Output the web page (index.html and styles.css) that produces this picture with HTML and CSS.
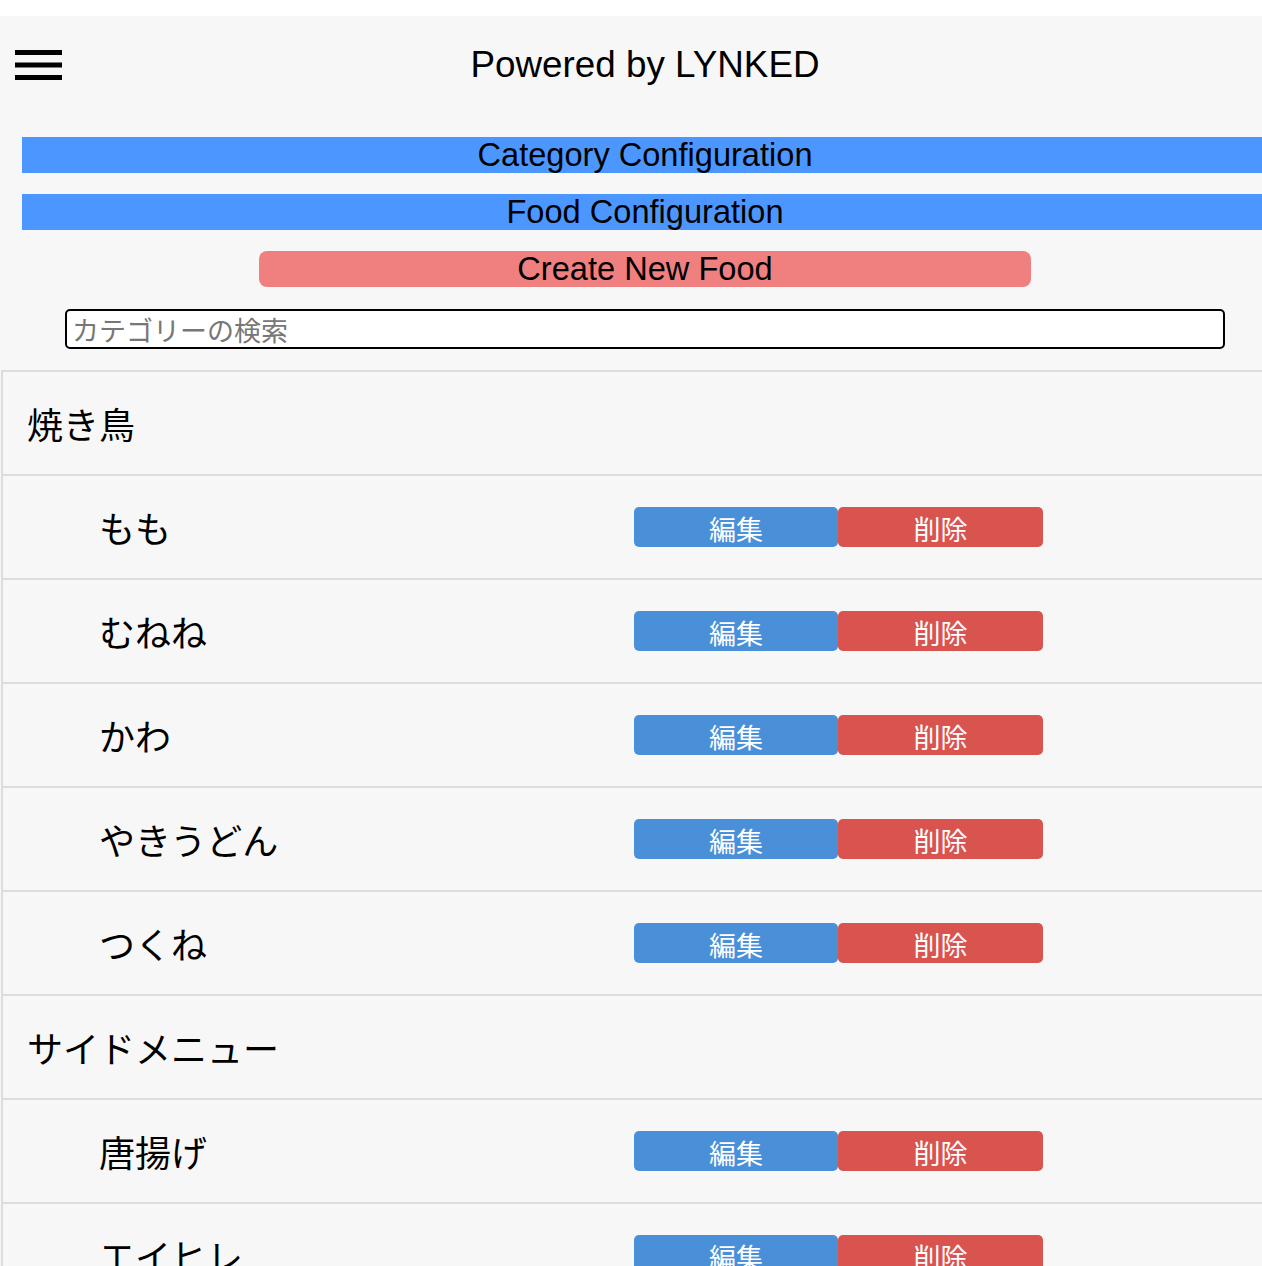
FILE: index.html
```html
<!DOCTYPE html>
<html lang="ja">
<head>
<meta charset="utf-8">
<title>Food Configuration</title>
<link rel="stylesheet" href="styles.css">
</head>
<body>
<div class="app">
  <header class="topbar">
    <div class="menu-cell">
      <svg class="hamburger" width="47" height="31" viewBox="0 0 47 31">
        <rect x="0" y="0" width="47" height="5" fill="#000"/>
        <rect x="0" y="12.5" width="47" height="5" fill="#000"/>
        <rect x="0" y="25" width="47" height="5" fill="#000"/>
      </svg>
    </div>
    <h1 class="title">Powered by LYNKED</h1>
    <div></div>
  </header>
  <nav class="controls">
    <button class="nav-btn">Category Configuration</button>
    <button class="nav-btn">Food Configuration</button>
    <button class="create-btn">Create New Food</button>
    <input class="search" type="text" placeholder="カテゴリーの検索">
  </nav>
  <ul class="list">
    <li class="row category">焼き鳥</li>
    <li class="row item"><span class="name">もも</span><span class="actions"><button class="edit">編集</button><button class="del">削除</button></span></li>
    <li class="row item"><span class="name">むねね</span><span class="actions"><button class="edit">編集</button><button class="del">削除</button></span></li>
    <li class="row item"><span class="name">かわ</span><span class="actions"><button class="edit">編集</button><button class="del">削除</button></span></li>
    <li class="row item"><span class="name">やきうどん</span><span class="actions"><button class="edit">編集</button><button class="del">削除</button></span></li>
    <li class="row item"><span class="name">つくね</span><span class="actions"><button class="edit">編集</button><button class="del">削除</button></span></li>
    <li class="row category">サイドメニュー</li>
    <li class="row item"><span class="name">唐揚げ</span><span class="actions"><button class="edit">編集</button><button class="del">削除</button></span></li>
    <li class="row item"><span class="name">エイヒレ</span><span class="actions"><button class="edit">編集</button><button class="del">削除</button></span></li>
  </ul>
</div>
</body>
</html>
```
FILE: styles.css
```css
html, body {
  margin: 0;
  padding: 0;
  overflow: hidden;
  background: #ffffff;
}
body {
  font-family: "Liberation Sans", Arial, "Noto Sans CJK JP", sans-serif;
  color: #000;
}
.app {
  margin-top: 16px;
  width: 1290px;
  background: #f7f7f7;
  min-height: 1300px;
}
.topbar {
  height: 98px;
  display: grid;
  grid-template-columns: 1fr auto 1fr;
  align-items: center;
}
.menu-cell {
  padding-left: 15px;
  display: flex;
  align-items: center;
}
.hamburger { display: block; }
.title {
  margin: 0;
  font-weight: normal;
  font-size: 36.8px;
  line-height: 40px;
}
.controls {
  display: flex;
  flex-direction: column;
  align-items: center;
  gap: 21px;
  padding-top: 23px;
}
.nav-btn, .create-btn {
  border: none;
  margin: 0;
  padding: 0;
  font-family: "Liberation Sans", Arial, sans-serif;
  font-size: 32.6px;
  line-height: 36px;
  height: 36px;
  color: #000;
}
.nav-btn {
  width: 1246px;
  background: #4c97ff;
}
.create-btn {
  width: 772px;
  background: #f08080;
  border-radius: 8px;
}
.search {
  margin-top: 1px;
  box-sizing: border-box;
  width: 1160px;
  height: 40px;
  border: 2px solid #000;
  border-radius: 5px;
  background: #fff;
  padding: 0 5px;
  font-family: "Noto Sans CJK JP", sans-serif;
  font-size: 27px;
}
.search::placeholder { color: #777; }
.list {
  list-style: none;
  margin: 21px 0 0 1px;
  padding: 0;
}
.row {
  box-sizing: border-box;
  height: 104px;
  border-top: 2px solid #dddddd;
  border-left: 2px solid #dddddd;
  display: flex;
  align-items: center;
  font-family: "Noto Sans CJK JP", sans-serif;
  font-size: 36px;
}
.category { padding-left: 24px; }
.item { padding-left: 96px; }
.name {
  width: 535px;
  flex: none;
}
.actions {
  display: flex;
}
.edit, .del {
  box-sizing: border-box;
  width: 204px;
  height: 40px;
  margin: 0;
  padding: 4px 0 0 0;
  border: none;
  border-radius: 5px;
  color: #fff;
  font-family: "Noto Sans CJK JP", sans-serif;
  font-size: 27px;
  line-height: 36px;
}
.edit { background: #4a90d9; }
.del { background: #d9534f; width: 205px; }
```
